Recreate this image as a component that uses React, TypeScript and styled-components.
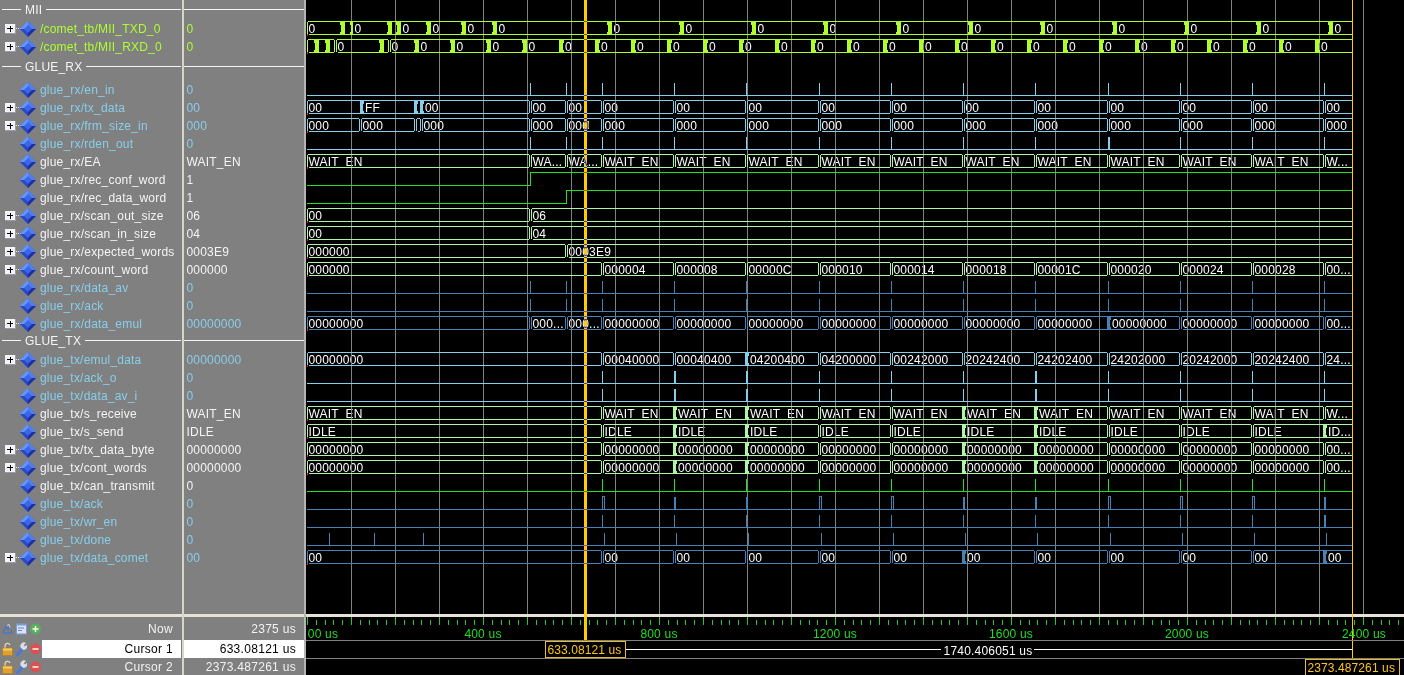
import React from "react";
import styled, { createGlobalStyle } from "styled-components";

const LIME = "#adff2f", SKY = "#87ceeb", PALE = "#aef5a6", GREEN = "#1fe31f", STEEL = "#4682b4", PANEL = "#808080";
const CUR = { x: 585.5, color: "#ffcc00" };
const END = 1352;

const GlobalStyle = createGlobalStyle`
  html, body { margin: 0; background: #000; }
`;

const Page = styled.div`
  display: flex; width: 1404px; height: 675px; overflow: hidden; background: ${PANEL};
  font: 12px "Liberation Sans", Arial, sans-serif; letter-spacing: .2px; color: #f2f2f2;
`;
const NamePane = styled.div`width: 182px; display: flex; flex-direction: column;`;
const ValuePane = styled.div`width: 120px; display: flex; flex-direction: column;`;
const Split = styled.div<{ $tone: string }>`width: 2px; background: ${p => p.$tone};`;
const Upper = styled.div`height: 614px; overflow: hidden;`;
const HRule = styled.div`height: 3px; background: #e6e2d8;`;
const Lower = styled.div`display: flex; flex-direction: column;`;

const Header = styled.div<{ $h: number; $line: number }>`
  height: ${p => p.$h}px; display: flex; gap: 4px; padding: 0 1px 0 2px; box-sizing: border-box;
  line-height: ${p => p.$line * 2 + 3}px; white-space: nowrap; color: #f4f4f4;
  &::before, &::after { content: ""; height: 1px; background: #f4f4f4; margin-top: ${p => p.$line}px; }
  &::before { width: 19px; }
  &::after { flex: 1; }
`;
const ValueRule = styled.div<{ $h: number; $line: number }>`
  height: ${p => p.$h}px; padding-top: ${p => p.$line}px; box-sizing: border-box;
  &::before { content: ""; display: block; height: 1px; background: #f4f4f4; }
`;
const SignalRow = styled.div<{ $color: string }>`
  height: 18px; display: flex; align-items: center; white-space: nowrap; color: ${p => p.$color};
`;
const TreeIcon = styled.svg`width: 40px; height: 18px; flex: none; display: block;`;
const ValueCell = styled.div<{ $color: string }>`
  height: 18px; line-height: 18px; padding-left: 2.5px; white-space: nowrap; color: ${p => p.$color};
`;
const ReadoutRow = styled.div<{ $h: number }>`height: ${p => p.$h}px; display: flex; align-items: stretch;`;
const IconTray = styled.div`width: 42px; flex: none; display: flex; align-items: center; gap: 3px; padding-left: 2px; box-sizing: border-box;`;
const TrayIcon = styled.svg`width: 11px; height: 14px; flex: none; display: block; filter: blur(.25px);`;
const Readout = styled.div<{ $on?: boolean; $pad?: number }>`
  flex: 1; text-align: right; padding-right: 8px; margin-right: ${p => p.$pad ?? 0}px;
  display: flex; align-items: center; justify-content: flex-end; letter-spacing: .3px;
  background: ${p => (p.$on ? "#fff" : "transparent")}; color: ${p => (p.$on ? "#000" : "#f2f2f2")};
`;
const WaveSvg = styled.svg`width: 1098px; height: 675px; display: block; background: #000; flex: none;`;
const BusText = styled.text`
  font: 12px "Liberation Sans", Arial, sans-serif; letter-spacing: .2px; word-spacing: 3.3px; fill: #fff; mix-blend-mode: difference;
`;
const TimeText = styled.text`font: 12px "Liberation Sans", Arial, sans-serif; fill: #22dd22; text-anchor: middle;`;
const CursorText = styled.text`font: 12px "Liberation Sans", Arial, sans-serif; letter-spacing: .1px; fill: #ffc41f;`;
const SpanText = styled.text`font: 12px "Liberation Sans", Arial, sans-serif; letter-spacing: .2px; fill: #fff; text-anchor: middle;`;

type Edge = number | [number, number];
type Wave =
  | { kind: "bus"; color: string; edges: Edge[]; labels: string[] }
  | { kind: "bit"; color: string; ticks: Edge[]; squares?: number[] }
  | { kind: "step"; color: string; x: number };

type Row =
  | { type: "hdr"; label: string; h: number; line: number }
  | { type: "sig"; name: string; value: string; color: string; expand?: boolean; wave: Wave };

const T = [530.5, 566.5, 602.5, 674.5, 746.5, 819.5, 891.5, 963.5, 1035.5, 1108.5, 1180.5, 1252.5, 1324.5];
const mk = (from: number, thick: number[] = [], w = 2, dx = 0): Edge[] =>
  T.slice(from).map((x, i) => (thick.includes(i + from) ? ([x + dx, w] as Edge) : x + dx));

const W0 = "00000000";
const rep = (s: string, n: number) => Array.from({ length: n }, () => s);
const RXD: Edge[] = [[316.5, 5], [327.5, 5], 335.5, [381.5, 5], 389.5, [416.5, 5], [452.5, 5], [488.5, 5], [524.5, 5],
  ...Array.from({ length: 22 }, (_, i) => [561 + 36 * i, 5] as Edge)];
const TXD: Edge[] = [[342.5, 5], [351.5, 3], [389.5, 5], [398.5, 5], [428.5, 5], [463.5, 5], [494.5, 5],
  ...[609.5, 681.5, 753.5, 825.5, 898.5, 970.5, 1042.5, 1114.5, 1186.5, 1258.5, 1330.5].map(x => [x, 5] as Edge)];

const rows: Row[] = [
  { type: "hdr", label: "MII", h: 20, line: 9 },
  { type: "sig", name: "/comet_tb/MII_TXD_0", value: "0", color: LIME, expand: true, wave: { kind: "bus", color: LIME, edges: TXD, labels: ["0", "", "0", "", ...rep("0", 15)] } },
  { type: "sig", name: "/comet_tb/MII_RXD_0", value: "0", color: LIME, expand: true, wave: { kind: "bus", color: LIME, edges: RXD, labels: ["", "", "", "0", "", ...rep("0", 27)] } },
  { type: "hdr", label: "GLUE_RX", h: 25, line: 10 },
  { type: "sig", name: "glue_rx/en_in", value: "0", color: SKY, wave: { kind: "bit", color: SKY, ticks: mk(0) } },
  { type: "sig", name: "glue_rx/tx_data", value: "00", color: SKY, expand: true, wave: { kind: "bus", color: SKY, edges: [[361.5, 4], [415.5, 4], [421.5, 4], ...mk(0)], labels: ["00", "FF", "", "00", ...rep("00", 13)] } },
  { type: "sig", name: "glue_rx/frm_size_in", value: "000", color: SKY, expand: true, wave: { kind: "bus", color: SKY, edges: [360.5, 415.5, 421.5, ...mk(0)], labels: ["000", "000", "", "000", ...rep("000", 13)] } },
  { type: "sig", name: "glue_rx/rden_out", value: "0", color: SKY, wave: { kind: "bit", color: SKY, ticks: mk(0, [9]) } },
  { type: "sig", name: "glue_rx/EA", value: "WAIT_EN", color: "#f4f4f4", wave: { kind: "bus", color: PALE, edges: mk(0), labels: ["WAIT EN", "WA...", "WA...", ...rep("WAIT EN", 10), "W..."] } },
  { type: "sig", name: "glue_rx/rec_conf_word", value: "1", color: "#f4f4f4", wave: { kind: "step", color: GREEN, x: T[0] } },
  { type: "sig", name: "glue_rx/rec_data_word", value: "1", color: "#f4f4f4", wave: { kind: "step", color: GREEN, x: T[1] } },
  { type: "sig", name: "glue_rx/scan_out_size", value: "06", color: "#f4f4f4", expand: true, wave: { kind: "bus", color: PALE, edges: [T[0]], labels: ["00", "06"] } },
  { type: "sig", name: "glue_rx/scan_in_size", value: "04", color: "#f4f4f4", expand: true, wave: { kind: "bus", color: PALE, edges: [T[0]], labels: ["00", "04"] } },
  { type: "sig", name: "glue_rx/expected_words", value: "0003E9", color: "#f4f4f4", expand: true, wave: { kind: "bus", color: PALE, edges: [T[1]], labels: ["000000", "0003E9"] } },
  { type: "sig", name: "glue_rx/count_word", value: "000000", color: "#f4f4f4", expand: true, wave: { kind: "bus", color: PALE, edges: mk(2), labels: ["000000", "000004", "000008", "00000C", "000010", "000014", "000018", "00001C", "000020", "000024", "000028", "00..."] } },
  { type: "sig", name: "glue_rx/data_av", value: "0", color: SKY, wave: { kind: "bit", color: STEEL, ticks: mk(0) } },
  { type: "sig", name: "glue_rx/ack", value: "0", color: SKY, wave: { kind: "bit", color: STEEL, ticks: mk(0) } },
  { type: "sig", name: "glue_rx/data_emul", value: W0, color: SKY, expand: true, wave: { kind: "bus", color: STEEL, edges: mk(0, [9], 4), labels: [W0, "000...", "000...", ...rep(W0, 10), "00..."] } },
  { type: "hdr", label: "GLUE_TX", h: 18, line: 7 },
  { type: "sig", name: "glue_tx/emul_data", value: W0, color: SKY, expand: true, wave: { kind: "bus", color: SKY, edges: mk(2, [4], 4), labels: [W0, "00040000", "00040400", "04200400", "04200000", "00242000", "20242400", "24202400", "24202000", "20242000", "20242400", "24..."] } },
  { type: "sig", name: "glue_tx/ack_o", value: "0", color: SKY, wave: { kind: "bit", color: SKY, ticks: mk(2, [3, 8, 4]) } },
  { type: "sig", name: "glue_tx/data_av_i", value: "0", color: SKY, wave: { kind: "bit", color: SKY, ticks: mk(2, [3, 8, 4]) } },
  { type: "sig", name: "glue_tx/s_receive", value: "WAIT_EN", color: "#f4f4f4", wave: { kind: "bus", color: PALE, edges: mk(2, [3, 4, 7, 8], 4), labels: ["WAIT EN", ...rep("WAIT EN", 10), "W..."] } },
  { type: "sig", name: "glue_tx/s_send", value: "IDLE", color: "#f4f4f4", wave: { kind: "bus", color: PALE, edges: mk(2, [3, 4, 7, 8, 12], 4), labels: ["IDLE", ...rep("IDLE", 10), "ID..."] } },
  { type: "sig", name: "glue_tx/tx_data_byte", value: W0, color: "#f4f4f4", expand: true, wave: { kind: "bus", color: PALE, edges: mk(2, [3, 4, 7, 8], 4), labels: [W0, ...rep(W0, 10), "00..."] } },
  { type: "sig", name: "glue_tx/cont_words", value: W0, color: "#f4f4f4", expand: true, wave: { kind: "bus", color: PALE, edges: mk(2, [3, 4, 7, 8], 4), labels: [W0, ...rep(W0, 10), "00..."] } },
  { type: "sig", name: "glue_tx/can_transmit", value: "0", color: "#f4f4f4", wave: { kind: "bit", color: GREEN, ticks: mk(2) } },
  { type: "sig", name: "glue_tx/ack", value: "0", color: SKY, wave: { kind: "bit", color: STEEL, ticks: mk(2, [3, 4, 7, 8, 12]), squares: [T[2], T[5], T[6], T[9], T[10], T[11]] } },
  { type: "sig", name: "glue_tx/wr_en", value: "0", color: SKY, wave: { kind: "bit", color: STEEL, ticks: mk(2, [12]) } },
  { type: "sig", name: "glue_tx/done", value: "0", color: SKY, wave: { kind: "bit", color: STEEL, ticks: [329.5, 374.5, 423.5, ...mk(2, [], 2, 2)] } },
  { type: "sig", name: "glue_tx/data_comet", value: "00", color: SKY, expand: true, wave: { kind: "bus", color: STEEL, edges: mk(2, [7, 12], 4), labels: ["00", ...rep("00", 11)] } },
];

const MARK: Record<string, string> = { [LIME]: "#7a5a10", [SKY]: "#6a2ad0", [PALE]: "#3838c8", [GREEN]: "#d8401c", [STEEL]: "#a03ca0" };

function layout() {
  let y = 0;
  const out: { c: number; r: Extract<Row, { type: "sig" }> }[] = [];
  rows.forEach(r => {
    if (r.type === "hdr") y += r.h;
    else { out.push({ c: y + 8, r }); y += 18; }
  });
  return out;
}
const placed = layout();
const ex = (e: Edge) => (typeof e === "number" ? e : e[0]);
const ew = (e: Edge) => (typeof e === "number" ? 0 : e[1]);

const BusLines: React.FC<{ w: Extract<Wave, { kind: "bus" }>; c: number }> = ({ w, c }) => {
  const top = c - 6.5, bot = c + 6.5;
  let d = `M308.5,${top}L307.5,${top + 1}V${bot - 1}L308.5,${bot}`;
  let prev = 308.5;
  const bars: React.ReactNode[] = [];
  w.edges.forEach((e, i) => {
    const x = ex(e), t = ew(e);
    if (x > END) return;
    if (t) {
      d += `M${prev},${top}H${x}M${prev},${bot}H${x}`;
      const h = t / 2;
      bars.push(<path key={i} fill={w.color} d={`M${x - h},${top - 0.5}H${x + h}V${top + 3}H${x + h - 0.5}V${bot - 3}H${x + h}V${bot + 0.5}H${x - h}V${bot - 3}H${x - h + 0.5}V${top + 3}H${x - h}Z`} />);
      prev = x;
    } else {
      d += `M${prev},${top}H${x - 2}M${prev},${bot}H${x - 2}`;
      d += `M${x - 2},${top}L${x - 1},${top + 1}V${bot - 1}L${x - 2},${bot}`;
      d += `M${x + 2},${top}L${x + 1},${top + 1}V${bot - 1}L${x + 2},${bot}`;
      prev = x + 2;
    }
  });
  d += `M${prev},${top}H${END}M${prev},${bot}H${END}`;
  return (
    <>
      <path d={d} stroke={w.color} fill="none" />
      {bars}
      <rect x={306.5} y={bot - 1} width={1.5} height={2} fill="#e02020" />
    </>
  );
};

const BusLabels: React.FC<{ w: Extract<Wave, { kind: "bus" }>; c: number }> = ({ w, c }) => (
  <>
    {w.labels.map((s, i) => {
      if (!s) return null;
      const e = i === 0 ? 306.5 : w.edges[i - 1];
      if (e === undefined) return null;
      const x = i === 0 ? 308.5 : ex(e) + (ew(e) ? ew(e) / 2 + 1.5 : 2);
      return <BusText key={i} x={x} y={c + 5}>{s}</BusText>;
    })}
  </>
);

const BitLines: React.FC<{ w: Extract<Wave, { kind: "bit" }>; c: number }> = ({ w, c }) => {
  const top = c - 6.5, bot = c + 6.5;
  return (
    <g stroke={w.color} fill="none">
      <path d={`M306.5,${bot}H${END}`} />
      {w.ticks.map((e, i) => (
        (w.squares || []).includes(ex(e)) ? null :
          <path key={i} d={`M${ex(e)},${top}V${bot}`} strokeWidth={ew(e) || 1} />
      ))}
      {(w.squares || []).map(x => <path key={x} d={`M${x},${bot}V${top}H${x + 2}V${bot}`} />)}
    </g>
  );
};

const gridXs = Array.from({ length: 24 }, (_, i) => 351.5 + 44 * i);
const tickXs = Array.from({ length: 125 }, (_, i) => ({ x: Math.round(307 + 8.8 * i) + 0.5, major: i % 5 === 0 }));
const timeLabels: [string, number][] = [["400 us", 483], ["800 us", 659], ["1200 us", 835], ["1600 us", 1011], ["2000 us", 1187], ["2400 us", 1364]];

const Waves: React.FC = () => (
  <WaveSvg viewBox="306 0 1098 675" shapeRendering="crispEdges">
    <g stroke="#808080">
      {gridXs.map(x => <line key={x} x1={x} x2={x} y1={0} y2={614} />)}
    </g>
    {placed.map(({ c, r }) => {
      const w = r.wave;
      if (w.kind === "bus") return <BusLines key={r.name + c} w={w} c={c} />;
      if (w.kind === "bit") return <BitLines key={r.name + c} w={w} c={c} />;
      return <path key={r.name} fill="none" stroke={w.color} d={`M306.5,${c + 6.5}H${w.x}V${c - 6.5}H${END}`} />;
    })}

    <rect x={306} y={614} width={1098} height={3} fill="#e6e2d8" />
    <rect x={584} y={0} width={3} height={641} fill={CUR.color} />
    <line x1={1352.5} x2={1352.5} y1={0} y2={659} stroke="#ffcc00" />

    {placed.map(({ c, r }) => {
      const w = r.wave;
      const color = MARK[w.color];
      if (w.kind === "bus") return (
        <g key={r.name + c + "m"} fill={color}>
          <rect x={584} y={c - 7} width={3} height={1} />
          <rect x={584} y={c + 6} width={3} height={1} />
        </g>
      );
      if (w.kind === "step") return <rect key={r.name + "m"} x={584} y={c - 7} width={3} height={1} fill={color} />;
      return <rect key={r.name + c + "m"} x={584} y={c + 6} width={3} height={1} fill={color} />;
    })}
    <rect x={584} y={121} width={5} height={8} fill={CUR.color} />

    {placed.map(({ c, r }) => (r.wave.kind === "bus" ? <BusLabels key={r.name + c + "t"} w={r.wave} c={c} /> : null))}

    <g stroke="#22cc22">
      {tickXs.map(t => <line key={t.x} x1={t.x} x2={t.x} y1={t.major ? 617 : 620} y2={625} />)}
    </g>
    <TimeText x={323} y={638}>00 us</TimeText>
    {timeLabels.map(([s, x]) => <TimeText key={s} x={x} y={638}>{s}</TimeText>)}

    <g stroke="#808080">
      <line x1={306} x2={1404} y1={640.5} y2={640.5} />
      <line x1={306} x2={1404} y1={658.5} y2={658.5} />
    </g>
    <line x1={626} x2={1352} y1={649.5} y2={649.5} stroke="#fff" />
    <rect x={941} y={642} width={93} height={16} fill="#000" />
    <SpanText x={988} y={655}>1740.406051 us</SpanText>

    <rect x={545.5} y={641.5} width={80} height={16} fill="#000" stroke="#e8bd2a" />
    <CursorText x={547.5} y={654}>633.08121 us</CursorText>
    <path d="M1305.5,675V659.5H1399.5V675" fill="#000" stroke="#e8bd2a" />
    <CursorText x={1307.5} y={672}>2373.487261 us</CursorText>
  </WaveSvg>
);

const Tree: React.FC<{ expand?: boolean }> = ({ expand }) => (
  <TreeIcon viewBox="0 0 40 18">
    {expand && (
      <g shapeRendering="crispEdges">
        <rect x={5} y={4} width={11} height={10} fill="#9a9aa8" />
        <rect x={5} y={4} width={10} height={9} fill="#f4f4f8" />
        <path d="M7,8.5H13M10,5.5V11.5" stroke="#000" />
        <path d="M16,8.5H21" stroke="#e8e8f0" strokeDasharray="1 1" />
      </g>
    )}
    <path d="M28,1L36,9L28,17L20,9Z" fill="#3c66e8" />
    <path d="M28,1L20,9L24,9L28,5Z" fill="#6496ff" />
    <path d="M28,1L36,9L32,9L28,5Z" fill="#5080f0" />
    <path d="M36,9L28,17L28,13L32,9Z" fill="#1c2f9c" />
    <path d="M20,9L28,17L28,13L24,9Z" fill="#2a48c0" />
  </TreeIcon>
);

const Lock = () => (
  <TrayIcon viewBox="0 0 11 14">
    <path d="M3,7V4a2.6,2.6 0 0 1 5,-1" stroke="#e8d8a0" strokeWidth="1.3" fill="none" />
    <rect x={0.5} y={6} width={10} height={7.5} fill="#e0a030" stroke="#b87818" strokeWidth=".6" />
    <rect x={1} y={6.5} width={9} height={2} fill="#f4cc60" />
  </TrayIcon>
);
const Wrench = () => (
  <TrayIcon viewBox="0 0 11 14">
    <path d="M1.5,12.5L7,6.5" stroke="#4a78d8" strokeWidth="3" strokeLinecap="round" />
    <path d="M5,6a3.6,3.6 0 0 1 5,-5l-2.2,2l1.2,1.4l2,-1.6a3.6,3.6 0 0 1 -4,5Z" fill="#d8dcec" />
  </TrayIcon>
);
const CircleBadge: React.FC<{ fill: string; plus?: boolean }> = ({ fill, plus }) => (
  <TrayIcon viewBox="0 0 11 14">
    <circle cx={5.5} cy={7} r={5.4} fill={fill} />
    <path d="M2.5,7H8.5" stroke="#f2f2f2" strokeWidth="1.6" />
    {plus && <path d="M5.5,4V10" stroke="#f2f2f2" strokeWidth="1.6" />}
  </TrayIcon>
);
const WaveGlyph = () => (
  <TrayIcon viewBox="0 0 11 14">
    <path d="M0.5,11H10.5L9,8.5M1,10.5L4,4.5L6,7.5L7,4.5" stroke="#4a78c0" strokeWidth="1.4" fill="none" />
    <path d="M5,3.5L7,2.5L8,5.5" stroke="#d8d8d8" fill="none" />
  </TrayIcon>
);
const Dialog = () => (
  <TrayIcon viewBox="0 0 11 14">
    <rect x={0} y={1.5} width={11} height={11} fill="#7a9ad8" />
    <rect x={1} y={3.5} width={9} height={8} fill="#d8e2f4" />
    <path d="M2,6H8M2,8.5H6" stroke="#6a88c0" />
  </TrayIcon>
);

export default function App() {
  return (
    <>
      <GlobalStyle />
      <Page>
        <NamePane>
          <Upper>
            {rows.map(r => r.type === "hdr"
              ? <Header key={r.label} $h={r.h} $line={r.line}>{r.label}</Header>
              : (
                <SignalRow key={r.name} $color={r.color}>
                  <Tree expand={r.expand} />
                  {r.name}
                </SignalRow>
              ))}
          </Upper>
          <HRule />
          <Lower>
            <ReadoutRow $h={23}>
              <IconTray><WaveGlyph /><Dialog /><CircleBadge fill="#58b058" plus /></IconTray>
              <Readout $pad={1}>Now</Readout>
            </ReadoutRow>
            <ReadoutRow $h={18}>
              <IconTray><Lock /><Wrench /><CircleBadge fill="#dc5050" /></IconTray>
              <Readout $on $pad={1}>Cursor 1</Readout>
            </ReadoutRow>
            <ReadoutRow $h={17}>
              <IconTray><Lock /><Wrench /><CircleBadge fill="#dc5050" /></IconTray>
              <Readout $pad={1}>Cursor 2</Readout>
            </ReadoutRow>
          </Lower>
        </NamePane>
        <Split $tone="#d8d4c8" />
        <ValuePane>
          <Upper>
            {rows.map(r => r.type === "hdr"
              ? <ValueRule key={r.label} $h={r.h} $line={r.line} />
              : <ValueCell key={r.name} $color={r.color}>{r.value}</ValueCell>)}
          </Upper>
          <HRule />
          <Lower>
            <ReadoutRow $h={23}><Readout>2375 us</Readout></ReadoutRow>
            <ReadoutRow $h={18}><Readout $on>633.08121 us</Readout></ReadoutRow>
            <ReadoutRow $h={17}><Readout>2373.487261 us</Readout></ReadoutRow>
          </Lower>
        </ValuePane>
        <Split $tone="#b4b4b4" />
        <Waves />
      </Page>
    </>
  );
}
